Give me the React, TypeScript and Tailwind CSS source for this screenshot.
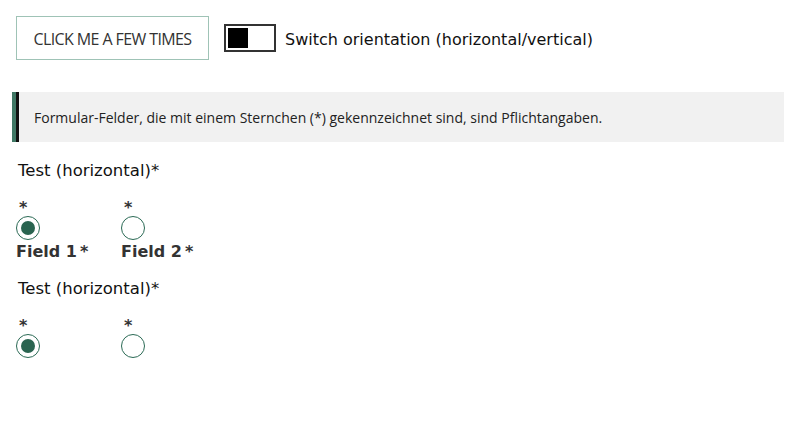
import React, { useState } from "react"

const dejavu = { fontFamily: "'DejaVu Sans', Verdana, sans-serif" }
const humanist = { fontFamily: "'Open Sans', Lato, sans-serif" }

function Radio({ checked }: { checked: boolean }) {
  return (
    <span className="flex h-[24px] w-[24px] items-center justify-center rounded-full border border-[#2b6a55] bg-white">
      {checked && <span className="h-[14px] w-[14px] rounded-full bg-[#2a6450]" />}
    </span>
  )
}

type Option = { label?: string; checked: boolean }

function Group({ options }: { options: Option[] }) {
  return (
    <div className="flex flex-col">
      <div className="pl-[2px] text-[16.5px] leading-[20px] text-[#111]" style={dejavu}>
        Test (horizontal)*
      </div>
      <div className="mt-[19px] flex">
        {options.map((o, i) => (
          <div key={i} className="flex w-[105px] flex-col">
            <span className="pl-[3px] text-[16px] font-bold leading-[16px] text-[#333]" style={dejavu}>*</span>
            <span>
              <Radio checked={o.checked} />
            </span>
            {o.label && (
              <span className="mt-[2px] text-[16px] font-bold leading-[20px] text-[#333]" style={dejavu}>
                {o.label}
                <span className="ml-[3px]">*</span>
              </span>
            )}
          </div>
        ))}
      </div>
    </div>
  )
}

export default function App() {
  const [count, setCount] = useState(0)
  return (
    <div className="h-[427px] w-[800px] bg-white" data-count={count}>
      <div className="flex items-center px-[16px] pt-[16px]">
        <button
          onClick={() => setCount(count + 1)}
          className="h-[44px] w-[193px] border border-[#9fc3b6] bg-white pt-[2px] text-[16px] text-[#333]"
          style={{ ...humanist, letterSpacing: "-0.6px" }}
        >
          CLICK ME A FEW TIMES
        </button>
        <div className="ml-[15px] flex h-[28px] w-[52px] items-center border-2 border-[#333] bg-white pl-[2px]">
          <span className="h-[20px] w-[20px] bg-black" />
        </div>
        <span className="ml-[9px] pt-[3px] text-[16px] text-[#111]" style={dejavu}>
          Switch orientation (horizontal/vertical)
        </span>
      </div>

      <div className="ml-[12px] mr-[16px] mt-[32px] flex h-[50px] bg-[#f1f1f1]">
        <span className="w-[4px] bg-[#3f7764]" />
        <span className="w-[3px] bg-[#111]" />
        <span className="flex items-center pl-[15px] text-[14px] text-[#222]" style={humanist}>
          Formular-Felder, die mit einem Sternchen (*) gekennzeichnet sind, sind Pflichtangaben.
        </span>
      </div>

      <div className="mt-[19px] flex flex-col gap-[17px] pl-[16px]">
        <Group options={[{ label: "Field 1", checked: true }, { label: "Field 2", checked: false }]} />
        <Group options={[{ checked: true }, { checked: false }]} />
      </div>
    </div>
  )
}
